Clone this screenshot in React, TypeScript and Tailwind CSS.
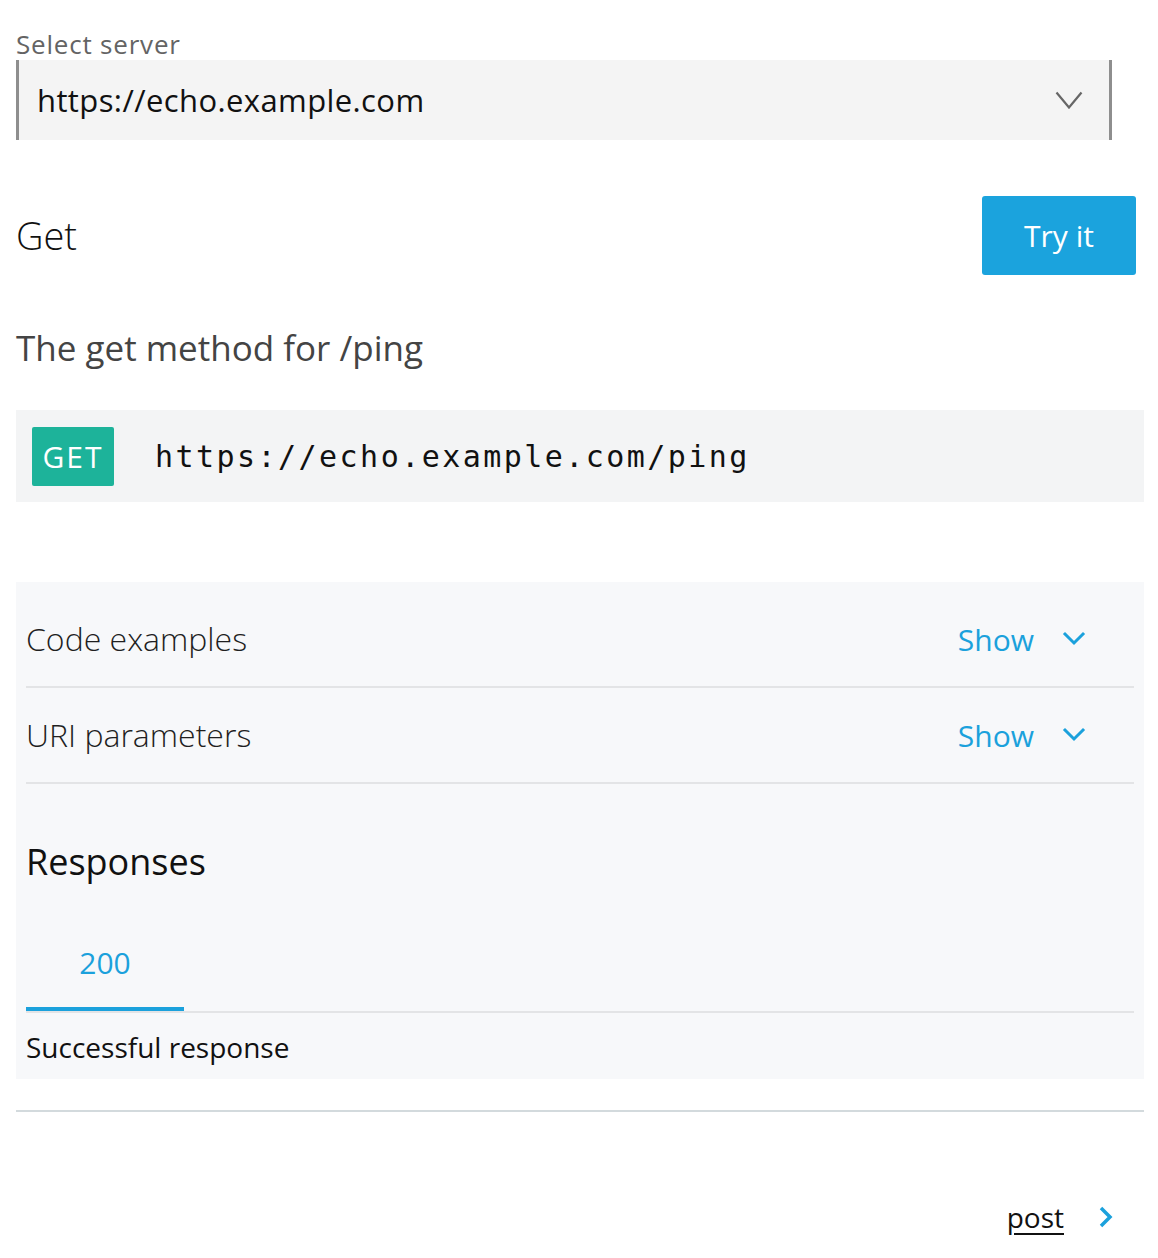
import { useState } from 'react'

function ChevronDown({ className }: { className?: string }) {
  return (
    <svg viewBox="0 0 24 16" className={className} fill="none" stroke="currentColor">
      <path d="M3 3l9 9 9-9" strokeWidth="3" strokeLinecap="square" />
    </svg>
  )
}

function CollapseRow({ title }: { title: string }) {
  const [open, setOpen] = useState(false)
  return (
    <div className="flex h-[96px] items-center justify-between border-b-2 border-[#e3e4e6]">
      <span className="text-[32px] font-light text-[#1f1f1f]">{title}</span>
      <button
        onClick={() => setOpen(!open)}
        className="mr-[48px] flex items-center gap-[28px] text-[30px] text-[#1ba1dc]"
      >
        {open ? 'Hide' : 'Show'}
        <ChevronDown className="h-[16px] w-[24px]" />
      </button>
    </div>
  )
}

export default function App() {
  return (
    <div className="min-h-[1258px] bg-white pl-4 pr-[14px] font-['Open_Sans',sans-serif] text-[#212121]">
      <div className="pt-[28px] text-[26px] leading-[32px] tracking-[0.8px] text-[#646464]">Select server</div>
      <div className="flex h-[80px] w-[1096px] items-center justify-between border-x-[3px] border-[#8e8e8e] bg-[#f4f4f4] pl-[18px] pr-[26px]">
        <span className="text-[31px] tracking-[0.4px] text-[#111]">https://echo.example.com</span>
        <svg viewBox="0 0 28 18" className="h-[18px] w-[28px]" fill="none" stroke="#666">
          <path d="M1.5 1.5l12.5 15 12.5-15" strokeWidth="2.2" />
        </svg>
      </div>

      <div className="mt-[55px] flex h-[80px] items-center justify-between pr-[8px]">
        <h1 className="text-[38px] font-light text-[#111]">Get</h1>
        <button className="h-[79px] w-[154px] rounded-[3px] bg-[#1ba3dd] text-[30px] text-white">
          Try it
        </button>
      </div>

      <p className="mt-[53px] text-[35px] leading-[40px] text-[#444]">The get method for /ping</p>

      <div className="mt-[42px] flex h-[92px] items-center gap-[41px] bg-[#f3f4f5] px-4">
        <span className="flex h-[59px] w-[82px] items-center justify-center rounded-[2px] bg-[#1db39a] text-[30px] tracking-[2px] text-white">
          GET
        </span>
        <span className="font-['DejaVu_Sans_Mono',monospace] text-[30px] tracking-[2.45px] text-[#111]">
          https://echo.example.com/ping
        </span>
      </div>

      <div className="mt-[80px] bg-[#f7f8fa] px-[10px] pt-[10px]">
        <CollapseRow title="Code examples" />
        <CollapseRow title="URI parameters" />

        <h2 className="mt-[56px] text-[36px] leading-[44px] text-[#111]">Responses</h2>

        <div className="mt-[38px] flex border-b-2 border-[#e3e4e6]">
          <div className="flex h-[89px] w-[158px] items-center justify-center border-b-4 border-[#1ba1dc] pb-[4px] text-[30px] text-[#1ba1dc]">
            200
          </div>
        </div>
        <div className="pb-[14px] pt-[16px] text-[28px] leading-[36px] text-[#111]">Successful response</div>
      </div>

      <div className="mt-[31px] h-[2px] bg-[#d3dadd]" />

      <div className="mt-[84px] flex items-center justify-end gap-[34px] pr-[30px]">
        <a href="#" className="text-[28px] text-[#111] underline underline-offset-[5px]">
          post
        </a>
        <svg viewBox="0 0 16 22" className="h-[22px] w-[16px]" fill="none" stroke="#1ba1dc">
          <path d="M3 2l9 9-9 9" strokeWidth="3.5" />
        </svg>
      </div>
    </div>
  )
}
